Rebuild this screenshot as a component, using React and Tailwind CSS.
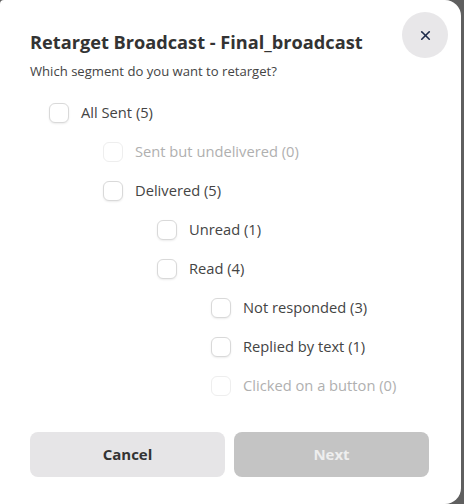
import { X } from "lucide-react";

const items = [
  { label: "All Sent (5)", level: 0 },
  { label: "Sent but undelivered (0)", level: 1, disabled: true },
  { label: "Delivered (5)", level: 1 },
  { label: "Unread (1)", level: 2 },
  { label: "Read (4)", level: 2 },
  { label: "Not responded (3)", level: 3 },
  { label: "Replied by text (1)", level: 3 },
  { label: "Clicked on a button (0)", level: 3, disabled: true },
];

const indent = ["pl-[19px]", "pl-[73px]", "pl-[127px]", "pl-[181px]"];

function Row({ label, level, disabled }) {
  return (
    <label className={`flex items-center h-[39px] ${indent[level]}`}>
      <span
        className={`size-5 rounded-[6px] border bg-white ${
          disabled ? "border-[#eeeeee]" : "border-[#d9d9d9] shadow-[0_1px_2px_rgba(0,0,0,0.08)]"
        }`}
      />
      <span className={`ml-3 text-[14.7px] ${disabled ? "text-[#b0b0b0]" : "text-[#444]"}`}>{label}</span>
    </label>
  );
}

export default function App() {
  return (
    <div className="h-[504px] w-[464px] bg-[#5f5f5f] pr-[3px] overflow-hidden" style={{ fontFamily: '"Open Sans", sans-serif' }}>
      <div className="h-full bg-white rounded-tl-[4px] rounded-r-2xl pl-[30px] pr-[32px] flex flex-col relative">
        <button className="absolute right-[13px] top-[12px] size-[46px] rounded-full bg-[#e8e7e9] flex items-center justify-center">
          <X className="size-[15px] text-[#1d2b4a]" strokeWidth={2.6} />
        </button>
        <h1 className="mt-[30px] text-[18.2px] font-bold text-[#333] leading-6">Retarget Broadcast - Final_broadcast</h1>
        <p className="mt-[7px] text-[13.1px] text-[#444] leading-5">Which segment do you want to retarget?</p>
        <div className="mt-[12px] flex flex-col">
          {items.map((it) => (
            <Row key={it.label} {...it} />
          ))}
        </div>
        <div className="mt-[27px] grid grid-cols-2 gap-[9px]">
          <button className="h-[45px] rounded-lg bg-[#e6e5e7] text-[15px] font-bold text-[#333]">Cancel</button>
          <button className="h-[45px] rounded-lg bg-[#c4c4c4] text-[15px] font-bold text-[#eeeeee]">Next</button>
        </div>
      </div>
    </div>
  );
}
